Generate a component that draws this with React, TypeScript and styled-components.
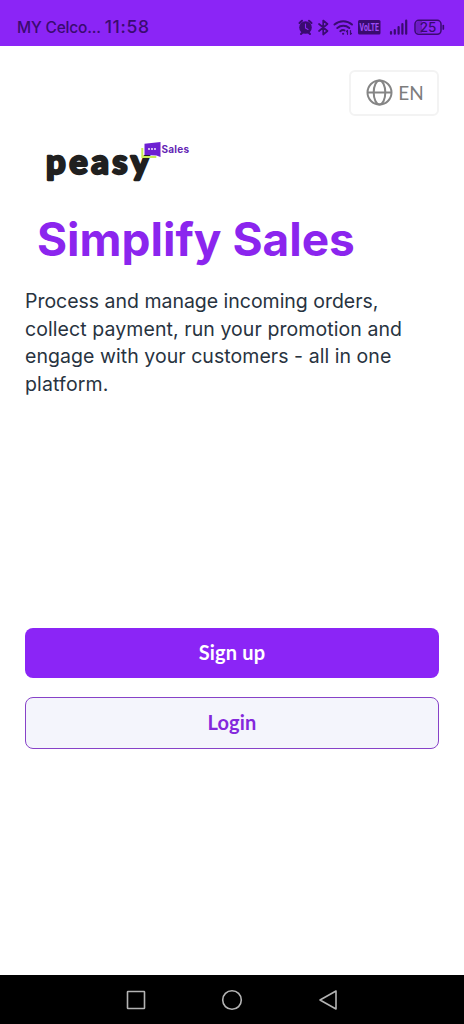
import React from 'react';
import styled, { createGlobalStyle } from 'styled-components';

const GlobalStyle = createGlobalStyle`
  * { box-sizing: border-box; }
  body { margin: 0; background: #fff; }
`;

const Screen = styled.div`
  width: 464px;
  height: 1024px;
  display: flex;
  flex-direction: column;
  background: #fff;
  overflow: hidden;
  font-family: Inter, "Liberation Sans", sans-serif;
`;

const StatusBar = styled.header`
  height: 46px;
  flex: none;
  display: flex;
  align-items: center;
  justify-content: space-between;
  padding: 8px 18px 0 17px;
  background: #8b25f6;
  color: #3a0b70;
`;

const StatusText = styled.div`
  display: flex;
  align-items: baseline;
  gap: 4px;
  font-size: 16px;
  line-height: 20px;
  font-weight: 500;
  white-space: nowrap;
`;

const Carrier = styled.span`
  font-size: 15.5px;
  letter-spacing: -0.2px;
`;

const Clock = styled.span`
  font-size: 17.5px;
  letter-spacing: 0.7px;
`;

const StatusIcons = styled.svg`
  display: block;
  width: 150px;
  height: 22px;
`;

const Content = styled.main`
  flex: 1;
  display: flex;
  flex-direction: column;
  padding: 24px 25px 0;
`;

const LanguageButton = styled.button`
  align-self: flex-end;
  width: 90px;
  height: 46px;
  display: flex;
  align-items: center;
  justify-content: center;
  gap: 5px;
  padding: 0 0 1px 2px;
  border: 2px solid #f3f3f3;
  border-radius: 6px;
  background: #fff;
  color: #7d7d7d;
  font-family: Lato, sans-serif;
  font-size: 19px;
`;

const Logo = styled.svg`
  display: block;
  width: 160px;
  height: 50px;
  margin: 20px 0 0 15px;
`;

const Title = styled.h1`
  margin: 25px 0 0 12px;
  font-size: 46px;
  line-height: 56px;
  font-weight: 650;
  color: #8b25ee;
  white-space: nowrap;
`;

const Description = styled.p`
  margin: 21px 0 0;
  font-size: 19.5px;
  line-height: 27.7px;
  color: #28333f;
`;

const Line = styled.span<{ $spacing: number }>`
  display: block;
  white-space: nowrap;
  letter-spacing: ${(p) => p.$spacing}px;
`;

const Actions = styled.div`
  margin-top: auto;
  margin-bottom: 226px;
  display: flex;
  flex-direction: column;
  gap: 19px;
`;

const ActionButton = styled.button<{ $primary?: boolean }>`
  width: 414px;
  height: ${(p) => (p.$primary ? 50 : 52)}px;
  padding: 0 0 2px;
  border: ${(p) => (p.$primary ? 0 : '1.5px solid #8742c8')};
  border-radius: 8px;
  background: ${(p) => (p.$primary ? '#8b25f6' : '#f4f5fc')};
  color: ${(p) => (p.$primary ? '#fff' : '#8428dc')};
  font-family: Lato, sans-serif;
  font-size: 20px;
  font-weight: 700;
  letter-spacing: 0.2px;
`;

const NavBar = styled.nav`
  height: 49px;
  flex: none;
  display: flex;
  align-items: center;
  justify-content: center;
  gap: 74px;
  padding-right: 1px;
  background: #000;
`;

const NavIcon = styled.svg`
  width: 22px;
  height: 22px;
  fill: none;
  stroke: #b4b4b4;
  stroke-width: 1.6;
  stroke-linejoin: round;
`;

const StatusGlyphs = () => (
  <StatusIcons viewBox="296 16 150 22" fill="none" stroke="#3a0b70" strokeWidth="1.7" strokeLinecap="round" strokeLinejoin="round">
    <circle cx="305.5" cy="27.5" r="6.3" fill="#3a0b70" stroke="none" />
    <path d="M299.500 23l2.500-2.300M311.500 23l-2.500-2.300M301 34l1.5-1.5M310 34l-1.5-1.5" strokeWidth="2" />
    <path d="M305.5 24v4l2.5 1.5" stroke="#8b25f6" strokeWidth="1.1" />
    <path d="M319 24l8.500 7-4.300 3.500v-14l4.300 3.500-8.500 7" strokeWidth="1.7" />
    <path d="M334.500 24.500c5-4.500 12.500-4.500 17.500 0M337.300 28c3.500-3 8.500-3 12 0M340.300 31.200c1.500-1.200 3-1.400 4.200-.8" strokeWidth="2" />
    <path d="M343 33.800l.2 0" strokeWidth="2" />
    <path d="M347.500 30.500v3.800M350.500 30.500v3.800M346.500 31.500l1-1M351.500 33.300l-1 1" strokeWidth="1.200" />
    <rect x="358" y="20" width="22.500" height="14.500" rx="1.500" fill="#3a0b70" stroke="none" />
    <text x="359.500" y="31" fill="#a04cf8" stroke="none" fontFamily="Roboto" fontWeight="700" fontSize="10.500" textLength="19.500" lengthAdjust="spacingAndGlyphs">VoLTE</text>
    <path d="M391 32v1.700M394.800 30v3.700M398.600 27v6.700M402.400 24v9.700M406.200 20.500v13.200" strokeWidth="2.200" />
    <rect x="415" y="20.300" width="26" height="14" rx="3.800" strokeWidth="1.500" />
    <path d="M419 21h3v12.600h-3q-3 0-3-3v-6.600q0-3 3-3z" fill="#6f1bc7" stroke="none" />
    <path d="M443.300 25.500v3.500" />
    <text x="428" y="32.200" textAnchor="middle" fill="#3a0b70" stroke="none" fontFamily="Inter" fontWeight="500" fontSize="13.500">25</text>
  </StatusIcons>
);

const PeasyLogo = () => (
  <Logo viewBox="40 136 160 50">
    <text x="46" y="174.200" fontFamily="Lato" fontWeight="900" fontSize="34.500" fill="#202020" stroke="#202020" strokeWidth="2.300" strokeLinejoin="round" textLength="103" lengthAdjust="spacing">peasy</text>
    <path d="M142.300 148v9h14" fill="none" stroke="#c9ee57" strokeWidth="2" />
    <path d="M144.500 143.800l16-1.800v15l-4-1.500-12-.5z" fill="#6d20d2" />
    <circle cx="149" cy="149" r="0.900" fill="#fff" />
    <circle cx="152" cy="149" r="0.900" fill="#fff" />
    <circle cx="155" cy="149" r="0.900" fill="#fff" />
    <text x="161.500" y="152.700" fontFamily="Inter" fontWeight="700" fontSize="10" fill="#6425b4" textLength="27.500">Sales</text>
  </Logo>
);

export default function App() {
  return (
    <Screen>
      <GlobalStyle />
      <StatusBar>
        <StatusText>
          <Carrier>MY Celco...</Carrier>
          <Clock>11:58</Clock>
        </StatusText>
        <StatusGlyphs />
      </StatusBar>
      <Content>
        <LanguageButton>
          <svg width="27" height="27" viewBox="0 0 27 27" fill="none" stroke="#858585" strokeWidth="2">
            <circle cx="13.500" cy="13.500" r="12" />
            <ellipse cx="13.500" cy="13.500" rx="5.800" ry="12" />
            <path d="M1.500 13.500h24" />
          </svg>
          EN
        </LanguageButton>
        <PeasyLogo />
        <Title>Simplify Sales</Title>
        <Description>
          <Line $spacing={-0.02}>Process and manage incoming orders,</Line>
          <Line $spacing={0.08}>collect payment, run your promotion and</Line>
          <Line $spacing={0.05}>engage with your customers - all in one</Line>
          <Line $spacing={0.15}>platform.</Line>
        </Description>
        <Actions>
          <ActionButton $primary>Sign up</ActionButton>
          <ActionButton>Login</ActionButton>
        </Actions>
      </Content>
      <NavBar>
        <NavIcon viewBox="0 0 22 22"><rect x="2.500" y="2.500" width="17" height="17" rx="0.500" /></NavIcon>
        <NavIcon viewBox="0 0 22 22"><circle cx="11" cy="11" r="9.300" /></NavIcon>
        <NavIcon viewBox="0 0 22 22"><path d="M3 11L19 2v18z" /></NavIcon>
      </NavBar>
    </Screen>
  );
}
